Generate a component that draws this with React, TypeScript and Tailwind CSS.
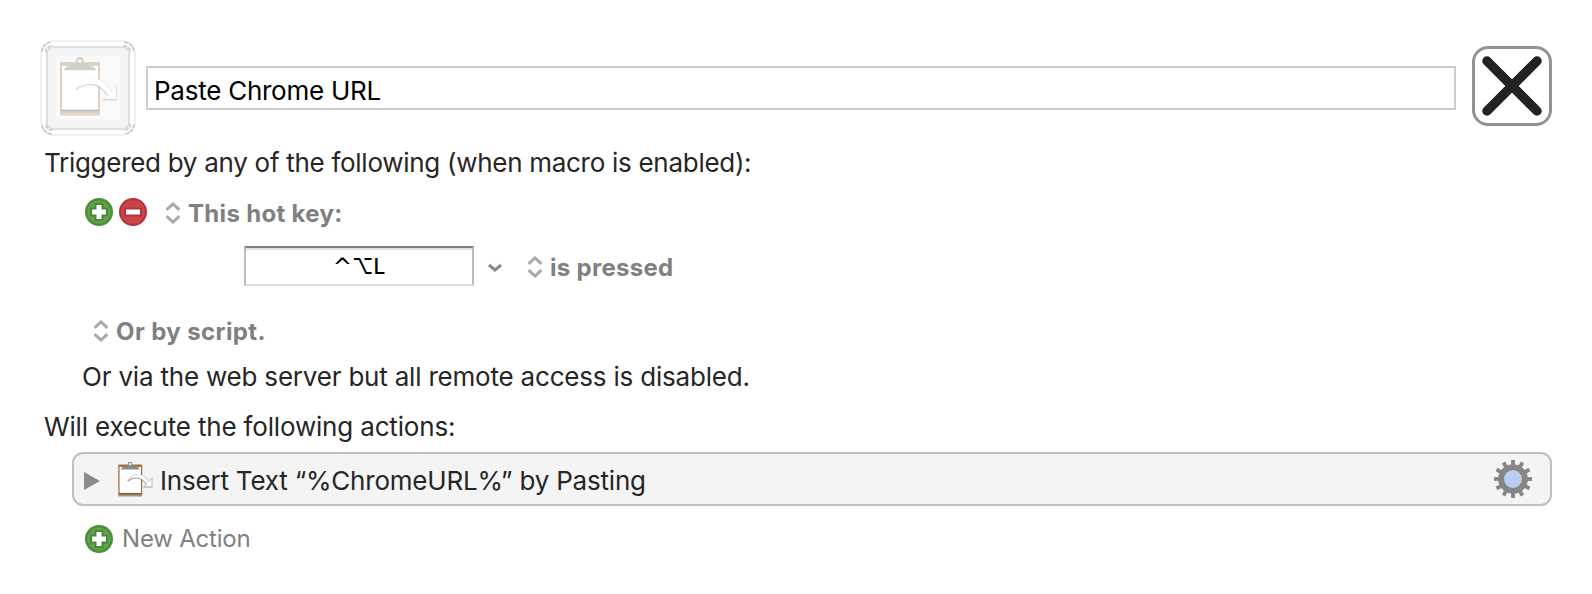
import type { ReactNode } from "react";

function UpDown({ className = "" }: { className?: string }) {
  return (
    <svg width="14" height="22" viewBox="0 0 14 22" className={`shrink-0 ${className}`} fill="none" stroke="#a9a9a9" strokeWidth="3">
      <path d="M0.6 7.800 7 2l6.400 5.800M0.600 14.200 7 20l6.400-5.800" />
    </svg>
  );
}

function Plus() {
  return (
    <svg width="28" height="28" viewBox="0 0 28 28" className="shrink-0">
      <circle cx="14" cy="14" r="14" fill="#4a8f3c" />
      <circle cx="14" cy="14" r="11.500" fill="#64a244" />
      <path d="M9.500 5h9v4.500H23v9h-4.500V23h-9v-4.500H5v-9h4.500z" fill="#47893a" />
      <path d="M11.500 7h5v4.500H21v5h-4.500V21h-5v-4.500H7v-5h4.500z" fill="#fff" />
    </svg>
  );
}

function Minus() {
  return (
    <svg width="28" height="28" viewBox="0 0 28 28" className="shrink-0">
      <circle cx="14" cy="14" r="14" fill="#b92f42" />
      <circle cx="14" cy="14" r="12" fill="#c84646" />
      <rect x="5" y="9.500" width="18" height="9" fill="#b92f42" />
      <rect x="7" y="11.500" width="14" height="5" fill="#fff" />
    </svg>
  );
}

function Clipboard({ size, className = "", faded = false }: { size: number; className?: string; faded?: boolean }) {
  const board = faded ? "#dfd0c0" : "#9c7040";
  const shade = faded ? "#b8b8b8" : "#666";
  const clip = faded ? "#cdcdcd" : "#88898d";
  return (
    <svg width={size} height={size} viewBox="0 0 64 64" className={`shrink-0 ${className}`}>
      <rect x="4" y="8" width="40" height="52" rx="1" fill={shade} opacity=".4" />
      <rect x="4" y="6" width="40" height="52" rx="1" fill={board} />
      <rect x="6" y="10" width="36" height="44" fill="#fff" />
      <path d="M6 54.500h36" stroke={shade} strokeWidth="1.500" />
      <path d="M8.300 14.300c.500-3 3-4 8-4.500 2-.300 3-1 4-3h7c1 2 2 2.700 4 3 5 .500 8 1.500 8.700 4.500z" fill={clip} />
      <circle cx="23.800" cy="5" r="3" fill="#f3f3f3" stroke={clip} strokeWidth="1.800" />
      <path d="M20 33C26 22 43 15 55 35l5-5v13H48l4-4C42 24 29 26 20 33z" fill={shade} opacity=".6" stroke={shade} strokeWidth={faded ? 1.2 : 2.4} transform="translate(0 .6)" />
      <path d="M20 33C26 22 43 15 55 35l5-5v13H48l4-4C42 24 29 26 20 33z" fill="#fff" />
    </svg>
  );
}

function MacroIcon() {
  return (
    <svg width="96" height="96" viewBox="0 0 96 96" className="shrink-0" fill="none">
      <rect x="1" y="1" width="94" height="94" rx="13" stroke="#f1f1f1" strokeWidth="2" />
      <rect x="7" y="7" width="82" height="82" rx="7" fill="#f4f4f4" stroke="#dedede" strokeWidth="2" />
      <g stroke="#c6c6c6" strokeWidth="1.600" strokeDasharray="4 1">
        <path d="M2 12Q3 3 12 2M84 2q9 1 10 10M94 84q-1 9-10 10M12 94q-9-1-10-10" />
        <path d="M5.500 12.500q.500-6 7-7M83.500 5.500q6.500 1 7 7M90.500 83.500q-.500 6-7 7M12.500 90.500q-6.500-1-7-7" />
      </g>
      <rect x="16" y="16" width="64" height="64" fill="#f9f9f9" />
      <g transform="translate(16 16)">
        <Clipboard size={64} faded />
      </g>
    </svg>
  );
}

function Gear() {
  return (
    <svg width="38" height="38" viewBox="-19 -19 38 38" className="shrink-0">
      {Array.from({ length: 12 }, (_, i) => (
        <rect key={i} x="-1.900" y="-19" width="3.800" height="8" fill="#868686" transform={`rotate(${i * 30})`} />
      ))}
      <circle r="14.800" fill="#868686" />
      <circle r="9" fill="#b9cff1" />
    </svg>
  );
}

function Line({ children, className }: { children: ReactNode; className: string }) {
  return <span className={`whitespace-nowrap leading-8 ${className}`}>{children}</span>;
}

export default function App() {
  return (
    <main className="flex h-[594px] w-[1592px] flex-col bg-white pt-10 font-['Inter',sans-serif] text-[26px] text-[#262626]">
      <header className="flex h-24 pl-10">
        <MacroIcon />
        <div className="mt-[26px] ml-[10px] flex h-11 w-[1310px] border-2 border-[#cccccc] pl-1.5">
          <Line className="mt-[7px] tracking-[-0.25px] text-black">Paste Chrome URL</Line>
        </div>
        <button className="mt-1.5 ml-4 flex size-20 items-center justify-center rounded-[16px] border-3 border-[#929292]">
          <svg width="60" height="60" viewBox="0 0 60 60" stroke="#222" strokeWidth="9.500" strokeLinecap="round">
            <path d="M5 5l50 50M55 5 5 55" />
          </svg>
        </button>
      </header>

      <Line className="mt-[11px] pl-[44px] tracking-[-0.285px]">Triggered by any of the following (when macro is enabled):</Line>

      <div className="mt-[18px] flex h-8 items-center pl-[85px] text-[24px] font-bold text-[#808080]">
        <div className="flex gap-1.5 pb-[3px]">
          <Plus />
          <Minus />
        </div>
        <UpDown className="ml-[19px]" />
        <Line className="ml-[8px] pt-0.5 tracking-[0.32px]">This hot key:</Line>
      </div>

      <div className="mt-[17px] flex h-10 items-center pl-[244px] text-[24px] font-bold text-[#808080]">
        <div className="flex h-10 w-[230px] justify-center border-2 border-x-[#bcbcbc] border-t-[#828282] border-b-[#dddddd] text-[21px] font-medium text-black shadow-[inset_0_2px_0_#e3e3e3]">
          <Line className="mt-[3px] font-['DejaVu_Sans',sans-serif] text-[23px]">^</Line>
          <Line className="mt-[3px]">⌥</Line>
          <Line className="mt-[3px]">L</Line>
        </div>
        <svg width="14" height="10" viewBox="0 0 14 10" className="mt-1 ml-[14px]" fill="none" stroke="#8a8a8a" strokeWidth="3">
          <path d="M1 2l6 5 6-5" />
        </svg>
        <UpDown className="mt-0.5 ml-[26px]" />
        <Line className="ml-[8px] pt-[3px] tracking-[0.3px]">is pressed</Line>
      </div>

      <div className="mt-[29px] flex h-8 items-center pl-[94px] text-[24px] font-bold text-[#808080]">
        <UpDown />
        <Line className="ml-[8px] pt-0.5 tracking-[0.4px]">Or by script.</Line>
      </div>

      <Line className="mt-[14px] pl-[82px] tracking-[-0.2px]">Or via the web server but all remote access is disabled.</Line>
      <Line className="mt-[18px] pl-[44px] tracking-[-0.17px]">Will execute the following actions:</Line>

      <div className="mt-[9px] ml-[72px] flex h-[54px] w-[1480px] items-center rounded-[11px] border-2 border-[#bfbfbf] bg-[#f4f4f4] pl-[10px]">
        <svg width="16" height="18" viewBox="0 0 16 18" className="mt-1"><path d="M0 0l16 9-16 9z" fill="#8b8b8b" /></svg>
        <Clipboard size={38} className="mt-0.5 ml-[16px]" />
        <Line className="ml-1.5 pt-[3px] tracking-[-0.2px]">Insert Text “%ChromeURL%” by Pasting</Line>
        <span className="flex-1" />
        <Gear />
        <span className="w-[18px]" />
      </div>

      <div className="mt-[17px] flex h-8 items-center pl-[85px] text-[24px] text-[#808080]">
        <Plus />
        <Line className="ml-[9px] tracking-[-0.2px]">New Action</Line>
      </div>
    </main>
  );
}
